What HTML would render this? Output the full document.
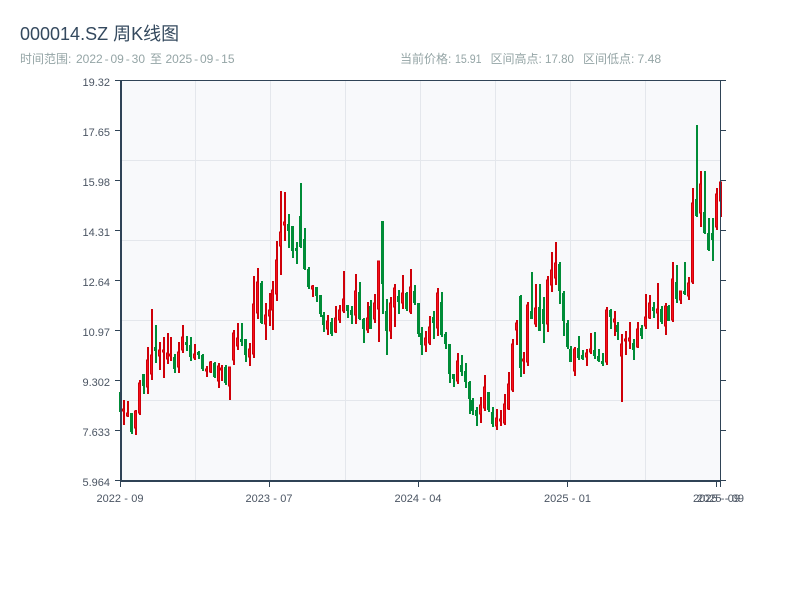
<!DOCTYPE html>
<html lang="zh">
<head>
<meta charset="utf-8">
<title>000014.SZ 周K线图</title>
<style>
html,body{margin:0;padding:0;background:#fff;width:800px;height:600px;overflow:hidden}
svg{display:block;font-family:"Liberation Sans","Noto Sans CJK SC",sans-serif}
.ax{fill:#4b5563;font-size:11px}
.sub{fill:#95a5a6;font-size:12px}
</style>
</head>
<body>
<svg width="800" height="600" viewBox="0 0 800 600" xmlns="http://www.w3.org/2000/svg">
<text x="20" y="40" font-size="18" fill="#34495e">000014.SZ 周K线图</text>
<text class="sub" x="20" y="63">时间范围:</text>
<text class="sub" x="76" y="63">2022<tspan dx="1.9">-</tspan><tspan dx="1.9">09</tspan><tspan dx="1.9">-</tspan><tspan dx="1.9">30</tspan></text>
<text class="sub" x="150" y="63">至</text>
<text class="sub" x="165.5" y="63">2025<tspan dx="1.9">-</tspan><tspan dx="1.9">09</tspan><tspan dx="1.9">-</tspan><tspan dx="1.9">15</tspan></text>
<text class="sub" x="400" y="63">当前价格:</text>
<text class="sub" x="455" y="63" textLength="26.6" lengthAdjust="spacingAndGlyphs">15.91</text>
<text class="sub" x="490.5" y="63">区间高点:</text>
<text class="sub" x="545" y="63" textLength="29" lengthAdjust="spacingAndGlyphs">17.80</text>
<text class="sub" x="583" y="63">区间低点:</text>
<text class="sub" x="637.5" y="63" textLength="23.7" lengthAdjust="spacingAndGlyphs">7.48</text>

<rect x="121" y="81" width="600" height="400" fill="#f8f9fb"/>
<path d="M195.5 81V480M270.5 81V480M345.5 81V480M420.5 81V480M495.5 81V480M570.5 81V480M645.5 81V480M122 160.5H720M122 240.5H720M122 320.5H720M122 400.5H720" stroke="#e4e7ec" stroke-width="1" fill="none"/>

<!-- green wicks -->
<path fill="none" stroke="#008c37" stroke-width="2" d="M132 413V434M144 374V394M156 325V363M175 354V373M187 336V351M191 337V361M199 351V359M203 354V371M215 362V378M226 365V385M242 323V346M246 339V362M262 281V324M289 214V248M293 226V258M297 242V264M301 183V248M305 228V270M309 267V289M317 287V302M321 295V317M324 312V332M332 318V336M348 305V318M352 306V324M360 282V320M364 318V343M371 300V329M383 221V314M387 299V355M399 290V314M407 292V311M415 285V305M419 303V337M422 327V355M434 311V339M442 292V337M446 332V349M450 344V383M454 374V387M462 355V376M466 363V388M470 381V414M473 398V415M477 407V426M489 392V412M493 407V427M521 295V377M532 272V319M540 284V331M544 297V343M560 262V304M564 291V336M568 320V349M571 346V362M579 336V360M583 350V360M595 332V359M599 349V362M603 353V366M611 309V329M618 322V340M634 339V360M642 325V339M654 302V318M662 306V324M669 305V321M677 265V303M685 262V295M697 125V217M705 171V234M709 218V251M713 218V261"/>
<!-- green bodies -->
<path fill="none" stroke="#008c37" stroke-width="3" d="M120.5 392V412M131.5 413V432M143.5 374V386M155.5 347V351M174.5 357V369M186.5 342V345M190.5 345V357M198.5 352V355M202.5 355V369M214.5 363V377M225.5 367V383M241.5 339V342M245.5 339V355M261.5 283V323M288.5 224V231M292.5 226V251M296.5 248V251M300.5 216V247M304.5 239V269M308.5 269V287M316.5 287V296M320.5 295V314M323.5 315V325M331.5 322V334M347.5 305V311M351.5 310V315M359.5 292V319M363.5 319V329M370.5 306V329M382.5 221V284M386.5 311V331M398.5 296V302M406.5 293V309M414.5 291V303M418.5 303V334M421.5 333V345M433.5 317V323M441.5 302V335M445.5 334V344M449.5 344V374M453.5 374V379M461.5 365V372M465.5 371V382M469.5 382V399M472.5 400V411M476.5 410V416M488.5 392V410M492.5 412V424M520.5 296V368M531.5 311V319M539.5 307V331M543.5 309V324M559.5 264V291M563.5 293V321M567.5 323V347M570.5 349V362M578.5 348V358M582.5 355V359M594.5 350V356M598.5 356V361M602.5 361V364M610.5 310V317M617.5 325V332M633.5 343V350M641.5 328V336M653.5 307V311M661.5 309V322M668.5 306V321M676.5 282V299M684.5 291V294M696.5 199V216M704.5 212V233M708.5 233V250M712.5 233V240"/>
<!-- red wicks -->
<path fill="none" stroke="#cf0009" stroke-width="2" d="M124 400V425M128 401V417M136 410V435M140 380V415M148 347V394M152 309V380M160 342V370M164 337V378M168 333V364M171 337V361M179 342V373M183 325V353M195 344V360M207 366V377M211 361V373M219 363V388M222 365V381M230 367V400M234 330V365M238 323V350M250 343V366M254 276V358M258 268V319M266 303V340M270 293V326M273 281V330M277 241V301M281 191V275M285 192V241M313 285V297M328 315V335M336 306V333M340 305V323M344 271V313M356 274V324M368 302V333M375 294V323M379 261V342M391 297V339M395 284V327M403 275V309M411 269V314M426 331V352M430 316V345M438 288V336M458 353V384M481 397V423M485 375V411M497 409V430M501 410V426M505 394V425M509 372V410M513 339V392M517 320V345M524 352V374M528 302V366M536 284V327M548 276V332M552 252V292M556 242V285M575 347V376M587 349V366M591 333V354M607 307V365M615 311V336M622 334V402M626 331V355M630 322V349M638 322V348M646 294V329M650 295V319M658 283V329M666 303V335M673 262V322M681 291V304M689 277V300M693 188V284M701 171V227M717 188V230M721 182V217"/>
<!-- red bodies -->
<path fill="#f5101c" stroke="#cf0009" stroke-width="1" d="M122.5 409V411h2V409zM126.5 413V416h2V413zM134.5 411V428h2V411zM138.5 383V413h2V383zM146.5 360V387h2V360zM150.5 355V374h2V355zM158.5 350V356h2V350zM162.5 350V352h2V350zM166.5 353V359h2V353zM169.5 354V356h2V354zM177.5 352V367h2V352zM181.5 337V350h2V337zM193.5 354V358h2V354zM205.5 369V371h2V369zM209.5 362V372h2V362zM217.5 366V381h2V366zM220.5 368V370h2V368zM228.5 367V386h2V367zM232.5 333V360h2V333zM236.5 338V346h2V338zM248.5 349V357h2V349zM252.5 304V354h2V304zM256.5 282V313h2V282zM264.5 315V324h2V315zM268.5 310V316h2V310zM271.5 290V310h2V290zM275.5 260V294h2V260zM279.5 232V246h2V232zM283.5 222V225h2V222zM311.5 286V289h2V286zM326.5 321V329h2V321zM334.5 318V332h2V318zM338.5 310V320h2V310zM342.5 299V311h2V299zM354.5 291V315h2V291zM366.5 318V330h2V318zM373.5 303V319h2V303zM377.5 261V309h2V261zM389.5 303V331h2V303zM393.5 288V307h2V288zM401.5 293V303h2V293zM409.5 287V312h2V287zM424.5 338V345h2V338zM428.5 327V343h2V327zM436.5 293V328h2V293zM456.5 361V381h2V361zM479.5 405V414h2V405zM483.5 387V408h2V387zM495.5 418V426h2V418zM499.5 419V421h2V419zM503.5 404V423h2V404zM507.5 384V409h2V384zM511.5 344V390h2V344zM515.5 323V330h2V323zM522.5 359V361h2V359zM526.5 305V362h2V305zM534.5 308V324h2V308zM546.5 280V324h2V280zM550.5 270V285h2V270zM554.5 263V278h2V263zM573.5 349V371h2V349zM585.5 353V357h2V353zM589.5 349V352h2V349zM605.5 310V362h2V310zM613.5 319V322h2V319zM620.5 344V356h2V344zM624.5 339V341h2V339zM628.5 338V341h2V338zM636.5 329V347h2V329zM644.5 317V326h2V317zM648.5 303V318h2V303zM656.5 309V313h2V309zM664.5 306V326h2V306zM671.5 279V320h2V279zM679.5 291V300h2V291zM687.5 283V296h2V283zM691.5 203V282h2V203zM699.5 184V213h2V184zM715.5 194V227h2V194zM719.5 182V201h2V182z"/>

<!-- axes -->
<path fill="none" stroke="#2f4356" stroke-width="1" d="M120 80.5H726M720.5 80V481M115 80.5H120M115 130.5H120M115 180.5H120M115 230.5H120M115 280.5H120M115 330.5H120M115 380.5H120M115 430.5H120M115 480.5H120M721 130.5H726M721 180.5H726M721 230.5H726M721 280.5H726M721 330.5H726M721 380.5H726M721 430.5H726M721 480.5H726M269.5 482V487M418.5 482V487M567.5 482V487M716.5 482V487M720.5 482V487M120.5 482V487"/>
<path fill="none" stroke="#2f4356" stroke-width="2" d="M121 80V482M120 481H721"/>

<!-- y labels -->
<g class="ax" text-anchor="end">
<text x="110" y="86">19.32</text>
<text x="110" y="136">17.65</text>
<text x="110" y="186">15.98</text>
<text x="110" y="236">14.31</text>
<text x="110" y="286">12.64</text>
<text x="110" y="336">10.97</text>
<text x="110" y="386">9.302</text>
<text x="110" y="436">7.633</text>
<text x="110" y="486">5.964</text>
</g>
<!-- x labels -->
<g class="ax">
<text x="96.5" y="502">2022<tspan dx="3.3">-</tspan><tspan dx="3.3">09</tspan></text>
<text x="245.5" y="502">2023<tspan dx="3.3">-</tspan><tspan dx="3.3">07</tspan></text>
<text x="394.5" y="502">2024<tspan dx="3.3">-</tspan><tspan dx="3.3">04</tspan></text>
<text x="544" y="502">2025<tspan dx="3.3">-</tspan><tspan dx="3.3">01</tspan></text>
<text x="693" y="502">2025<tspan dx="3.3">-</tspan><tspan dx="3.3">09</tspan></text>
<text x="697" y="502">2025<tspan dx="3.3">-</tspan><tspan dx="3.3">09</tspan></text>
</g>
</svg>
</body>
</html>
